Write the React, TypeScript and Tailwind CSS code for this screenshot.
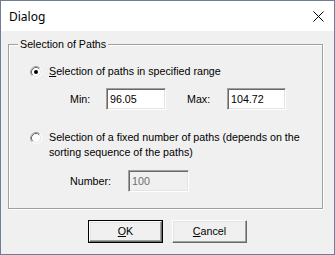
import React from "react";

const ui = { fontFamily: '"Liberation Sans", Arial, sans-serif' };

function Radio({ checked }: { checked?: boolean }) {
    return (
        <svg width="12" height="12" viewBox="0 0 12 12" className="shrink-0">
            <circle cx="6" cy="6" r="5" fill="#fff" />
            <path d="M2.11 9.89 A5.5 5.5 0 0 1 9.89 2.11" fill="none" stroke="#a0a0a0" />
            <path d="M9.89 2.11 A5.5 5.5 0 0 1 2.11 9.89" fill="none" stroke="#ffffff" />
            <path d="M2.82 9.18 A4.5 4.5 0 0 1 9.18 2.82" fill="none" stroke="#696969" />
            <path d="M9.18 2.82 A4.5 4.5 0 0 1 2.82 9.18" fill="none" stroke="#e3e3e3" />
            {checked && <circle cx="6" cy="6" r="2" fill="#000" />}
        </svg>
    );
}

function Field({ value, width, disabled }: { value: string; width: string; disabled?: boolean }) {
    return (
        <div
            className={`${width} h-[22px] flex items-center pl-[3px] border-t border-l border-t-[#a0a0a0] border-l-[#a0a0a0] border-r border-b border-r-white border-b-white shadow-[inset_1px_1px_0_#696969,inset_-1px_-1px_0_#e3e3e3] ${disabled ? "bg-[#f0f0f0] text-[#6d6d6d]" : "bg-white text-black"}`}
        >
            {value}
        </div>
    );
}

function Button({ children, isDefault }: { children: React.ReactNode; isDefault?: boolean }) {
    return (
        <div className={`w-[75px] h-[23px] ${isDefault ? "border border-black" : ""}`}>
            <div className="h-full flex items-center justify-center bg-[#f0f0f0] border-t border-l border-t-white border-l-white border-r border-b border-r-[#696969] border-b-[#696969] shadow-[inset_-1px_-1px_0_#a0a0a0,inset_1px_1px_0_#e3e3e3]">
                {children}
            </div>
        </div>
    );
}

export default function App() {
    return (
        <div className="w-[335px] h-[255px] border border-[#6e7f95] flex flex-col bg-[#f0f0f0] text-[10.7px] leading-[13px] text-black" style={ui}>
            {/* title bar */}
            <div className="h-[30px] bg-white flex items-center justify-between pl-[8px] pr-[10px] shrink-0">
                <span className="text-[12px] pt-[1px]" style={{ fontFamily: '"Noto Sans", "Open Sans", sans-serif' }}>Dialog</span>
                <svg width="11" height="11" viewBox="0 0 11 11">
                    <path d="M0.5 0.5 L10.5 10.5 M10.5 0.5 L0.5 10.5" stroke="#000" strokeWidth="1" />
                </svg>
            </div>

            {/* client */}
            <div className="flex-1 flex flex-col pl-[7px] pt-[13px]">
                <div className="relative w-[315px] h-[165px] border border-[#a0a0a0] shadow-[inset_1px_1px_0_#fff,1px_1px_0_#fff] pl-[21px] pt-[20px] flex flex-col">
                    <span className="absolute left-[9px] top-[-7px] px-[2px] bg-[#f0f0f0]">Selection of Paths</span>

                    <div className="flex items-center gap-[7px] h-[13px]">
                        <Radio checked />
                        <span><span className="underline">S</span>election of paths in specified range</span>
                    </div>

                    <div className="flex items-center mt-[10px] pl-[40px]">
                        <span className="w-[36px]">Min:</span>
                        <Field value="96.05" width="w-[60px]" />
                        <span className="w-[40px] ml-[21px]">Max:</span>
                        <Field value="104.72" width="w-[59px]" />
                    </div>

                    <div className="flex items-start gap-[7px] mt-[21px]">
                        <div className="h-[13px] flex items-center">
                            <Radio />
                        </div>
                        <span className="leading-[15px] -mt-[1px]">
                            Selection of a fixed number of paths (depends on the
                            <br />
                            sorting sequence of the paths)
                        </span>
                    </div>

                    <div className="flex items-center mt-[10px] pl-[40px]">
                        <span className="w-[58px]">Number:</span>
                        <Field value="100" width="w-[61px]" disabled />
                    </div>
                </div>

                <div className="flex justify-center gap-[9px] mt-[11px] pr-[7px]">
                    <Button isDefault>
                        <span><span className="underline">O</span>K</span>
                    </Button>
                    <Button>
                        <span><span className="underline">C</span>ancel</span>
                    </Button>
                </div>
            </div>
        </div>
    );
}
